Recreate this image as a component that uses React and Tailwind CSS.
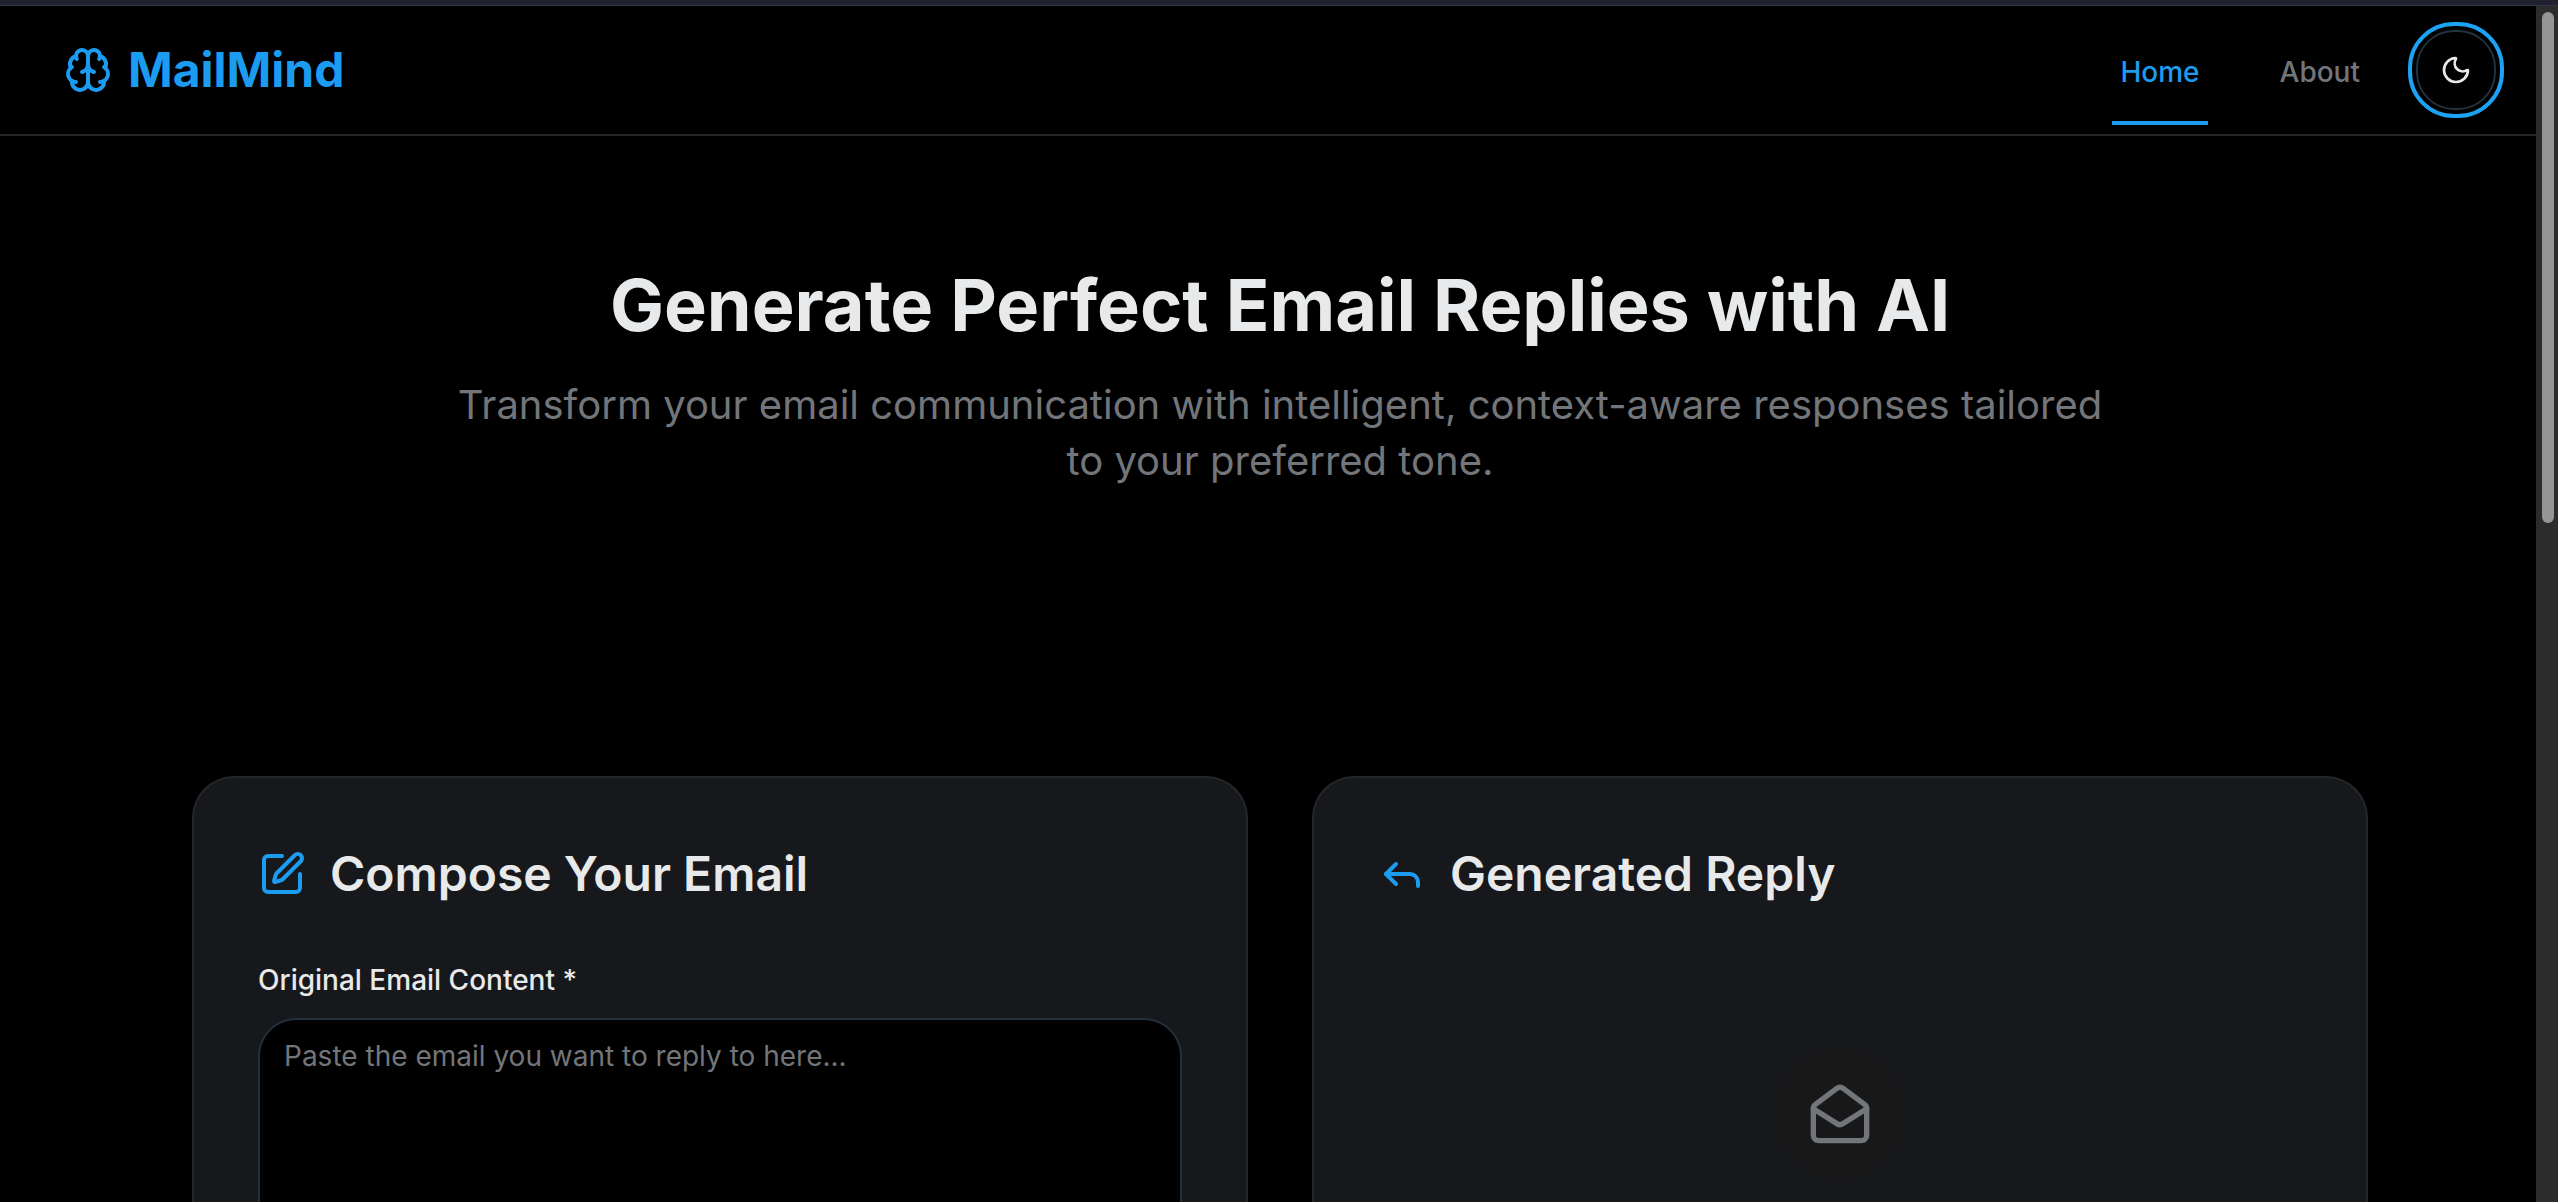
import { useState } from "react";
import { Brain, Moon, SquarePen, Reply, MailOpen } from "lucide-react";

function Header() {
  return (
    <header className="flex h-[130px] shrink-0 items-center justify-between border-b-2 border-[#242628] px-16">
      <a href="#home" className="flex items-center gap-4 text-[#1c9cf0]">
        <Brain size={48} />
        <span className="text-5xl leading-[50px] font-bold">MailMind</span>
      </a>
      <div className="flex items-center gap-12">
        <nav className="flex items-center gap-16 text-[28px] font-medium">
          <a href="#home" className="relative px-2 pt-4 pb-3 leading-11 text-[#1c9cf0]">
            Home
            <span className="absolute inset-x-0 -bottom-[19px] h-1 bg-[#1c9cf0]" />
          </a>
          <a href="#about" className="px-2 pt-4 pb-3 leading-11 text-[#72767a]">
            About
          </a>
        </nav>
        <button
          type="button"
          aria-label="Toggle theme"
          className="flex size-20 items-center justify-center rounded-[38px] border-2 border-[#22303c] bg-black text-[#e7e9ea] outline-4 outline-offset-4 outline-[#1da1f2]"
        >
          <Moon size={32} />
        </button>
      </div>
    </header>
  );
}

function Card({ icon: Icon, title, children }) {
  return (
    <section className="flex flex-1 flex-col rounded-t-[42px] border-2 border-b-0 border-[#242628] bg-[#17181c] p-16 pb-0">
      <h2 className="flex items-center gap-6 text-5xl leading-[64px] font-semibold">
        <Icon size={48} className="text-[#1c9cf0]" />
        {title}
      </h2>
      {children}
    </section>
  );
}

export default function App() {
  const [email, setEmail] = useState("");
  return (
    <div className="relative flex h-screen flex-col overflow-hidden bg-black font-['Inter',sans-serif] text-[#e7e9ea]">
      <div className="h-1.5 shrink-0 border-b border-[#35354d] bg-[#20202e]" />
      <div className="flex min-h-0 w-[calc(100%+2px)] flex-1 flex-col">
        <Header />
        <main className="flex min-h-0 flex-1 flex-col">
          <div className="flex shrink-0 flex-col items-center gap-8 pt-[129px] pb-[127px] text-center">
            <h1 className="text-7xl leading-20 font-bold">Generate Perfect Email Replies with AI</h1>
            <p className="max-w-[1680px] text-[40px] leading-14 text-[#72767a]">
              Transform your email communication with intelligent, context-aware responses tailored to your
              preferred tone.
            </p>
          </div>
          <div className="flex flex-1 gap-16 px-48 pt-40">
            <Card icon={SquarePen} title="Compose Your Email">
              <label htmlFor="email" className="mt-15 text-[28px] leading-7 font-medium">
                Original Email Content *
              </label>
              <textarea
                id="email"
                value={email}
                onChange={(e) => setEmail(e.target.value)}
                placeholder="Paste the email you want to reply to here..."
                className="mt-6 flex-1 resize-none rounded-t-[38px] border-2 border-b-0 border-[#22303c] bg-black px-6 py-4 text-[28px] leading-10 placeholder:text-[#72767a]"
              />
            </Card>
            <Card icon={Reply} title="Generated Reply">
              <div className="mt-36 flex size-32 shrink-0 items-center justify-center self-center rounded-full bg-[#181818] text-[#72767a]">
                <MailOpen size={64} />
              </div>
            </Card>
          </div>
        </main>
      </div>
      <div className="absolute top-1.5 right-0 bottom-0 w-[22px] bg-[#2c2c2c] pt-1.5 pr-1 pl-1.5">
        <div className="h-[511px] rounded-full bg-[#959595]" />
      </div>
    </div>
  );
}
